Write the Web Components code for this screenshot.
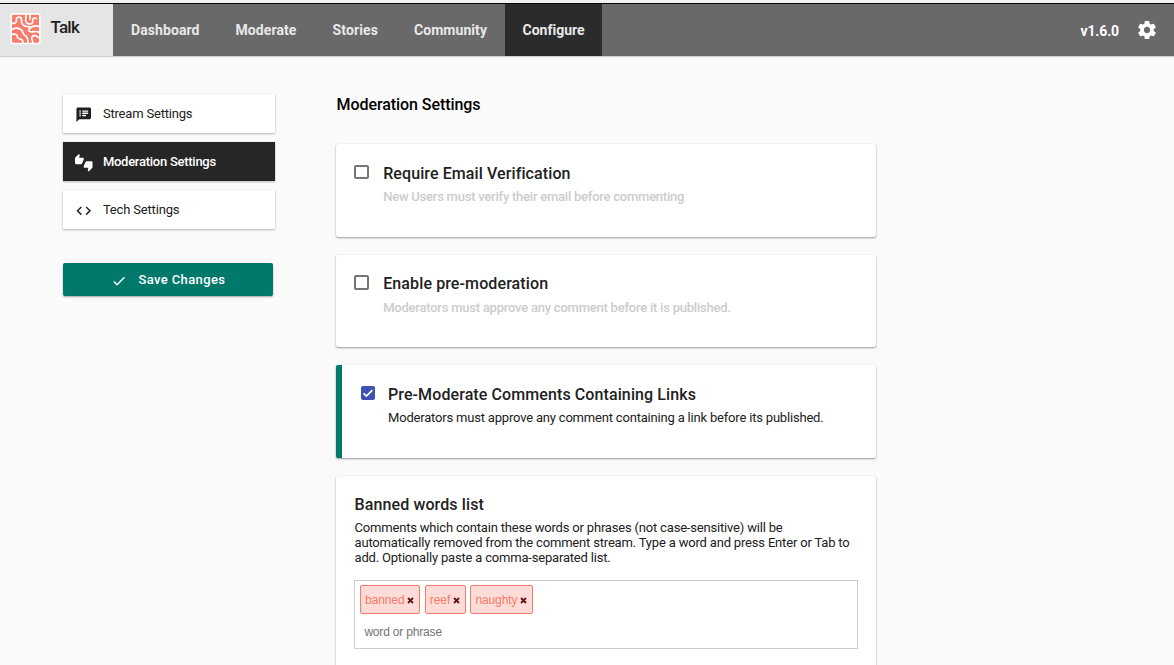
<!DOCTYPE html>
<html lang="en">
<head>
<meta charset="utf-8">
<title>Talk – Configure</title>
<style>
  html, body { margin: 0; height: 665px; overflow: hidden; background: #fafafa; }
  body { font-family: Roboto, "Liberation Sans", sans-serif; color: #212121; }
</style>
</head>
<body>
<talk-app></talk-app>

<script>
function component(name, html, setup) {
  const template = document.createElement('template');
  template.innerHTML = html;
  customElements.define(name, class extends HTMLElement {
    connectedCallback() {
      if (this.shadowRoot) return;
      this.attachShadow({ mode: 'open' }).append(template.content.cloneNode(true));
      if (setup) setup(this, this.shadowRoot);
    }
  });
}

component('talk-logo', `
  <style>
    :host { display: flex; box-sizing: border-box; width: 113px; height: 52px; padding: 8px 0 0 10px; background: #e5e5e5; color: #212121; }
    svg { display: block; width: 31px; height: 33px; flex: none; }
    .name { margin: 5px 0 0 9.5px; font-size: 17px; line-height: 20px; font-weight: 500; }
  </style>
  <svg viewBox="30 36 93 99">
    <rect x="31" y="39" width="91" height="94" rx="9" fill="#fff"/>
    <rect x="36" y="44" width="81" height="84" rx="4" fill="#f77c6b"/>
    <g fill="none" stroke="#fff" stroke-width="5" stroke-linecap="round" stroke-linejoin="round">
      <path d="M36 70C46 71 50 67 49 61C48 53 54 50 60 52C68 55 63 63 65 68C68 77 79 80 88 80"/>
      <path d="M77 44C80 52 74 58 78 66C83 75 99 74 98 64C97 54 102 51 109 56"/>
      <path d="M90 44V58"/>
      <path d="M36 88C47 83 58 84 64 90C71 96 68 104 76 107C84 111 84 119 84 128"/>
      <path d="M36 103C47 101 51 104 52 111C53 118 60 116 65 119C69 122 69 124 69 128"/>
      <path d="M116 79C105 76 94 79 88 86C82 95 94 97 101 95C107 94 112 95 116 97"/>
      <path d="M116 113C109 107 101 104 96 110C92 116 100 121 98 128"/>
    </g>
  </svg>
  <fit-text class="name" width="28.5">Talk</fit-text>
`);

component('nav-item', `
  <style>
    :host { display: flex; align-items: center; box-sizing: border-box; height: 52px; padding: 0 18px; color: #e8e8e8; font-size: 14px; line-height: 20px; font-weight: 700; }
    :host([active]) { background: #2b2b2b; padding: 0 17.5px; }
  </style>
  <slot></slot>
`);

component('talk-header', `
  <style>
    :host { display: flex; box-sizing: border-box; height: 56px; padding-top: 3px; background: #f1f1f2; }
    header { display: flex; flex: 1; height: 52px; border-top: 1px solid #000; background: #696969; box-shadow: 0 1px 0 #cfcfcf, 0 2px 1px #eee; position: relative; }
    nav { display: flex; }
    .tools { display: flex; align-items: center; margin-left: auto; padding-right: 17px; gap: 18px; color: #fff; font-size: 14px; font-weight: 700; }
    .tools fit-text { margin-top: 2px; }
    svg { width: 20px; height: 20px; }
  </style>
  <header>
    <talk-logo></talk-logo>
    <nav>
      <nav-item><fit-text width="68.5">Dashboard</fit-text></nav-item>
      <nav-item><fit-text width="61">Moderate</fit-text></nav-item>
      <nav-item><fit-text width="45.5">Stories</fit-text></nav-item>
      <nav-item><fit-text width="73">Community</fit-text></nav-item>
      <nav-item active><fit-text width="62">Configure</fit-text></nav-item>
    </nav>
    <div class="tools">
      <fit-text width="38.5">v1.6.0</fit-text>
      <svg viewBox="1 1 22 22" fill="#fff"><path d="M19.43 12.98c.04-.32.07-.64.07-.98s-.03-.66-.07-.98l2.11-1.65c.19-.15.24-.42.12-.64l-2-3.46c-.12-.22-.39-.3-.61-.22l-2.49 1c-.52-.4-1.08-.73-1.69-.98l-.38-2.65C14.46 2.18 14.25 2 14 2h-4c-.25 0-.46.18-.49.42l-.38 2.65c-.61.25-1.17.59-1.69.98l-2.49-1c-.23-.09-.49 0-.61.22l-2 3.46c-.13.22-.07.49.12.64l2.11 1.65c-.04.32-.07.65-.07.98s.03.66.07.98l-2.11 1.65c-.19.15-.24.42-.12.64l2 3.46c.12.22.39.3.61.22l2.49-1c.52.4 1.08.73 1.69.98l.38 2.65c.03.24.24.42.49.42h4c.25 0 .46-.18.49-.42l.38-2.65c.61-.25 1.17-.59 1.69-.98l2.49 1c.23.09.49 0 .61-.22l2-3.46c.12-.22.07-.49-.12-.64l-2.11-1.65zM12 15.5c-1.93 0-3.5-1.57-3.5-3.5s1.57-3.5 3.5-3.5 3.5 1.57 3.5 3.5-1.57 3.5-3.5 3.5z"/></svg>
    </div>
  </header>
`);

component('side-item', `
  <style>
    :host { display: flex; align-items: center; box-sizing: border-box; height: 39px; padding-left: 12px; gap: 10.4px; background: #fff; color: #212121; font-size: 13px; line-height: 20px; box-shadow: 0 1px 2px rgba(0,0,0,.26), 0 0 1px rgba(0,0,0,.12); }
    :host([active]) { background: #262626; color: #fff; font-weight: 500; }
    ::slotted(svg) { width: 17.5px; height: 17.5px; margin-top: 3px; fill: currentColor; flex: none; }
  </style>
  <slot></slot>
`);

component('save-button', `
  <style>
    :host { display: block; }
    button { display: flex; align-items: center; width: 210px; height: 33px; padding: 0 0 0 48px; gap: 11.4px; border: 0; border-radius: 2px; background: #00796b; color: #fff; font: 500 13px/20px Roboto, "Liberation Sans", sans-serif; box-shadow: 0 1px 2px rgba(0,0,0,.35); }
    svg { width: 16px; height: 16px; margin-top: 3px; fill: #fff; }
  </style>
  <button>
    <svg viewBox="0 0 24 24"><path d="M9 16.17L4.83 12l-1.42 1.41L9 19 21 7l-1.41-1.41z"/></svg>
    <slot></slot>
  </button>
`);

component('side-bar', `
  <style>
    :host { display: flex; flex-direction: column; width: 212px; gap: 9px; }
    save-button { margin-top: 25px; }
  </style>
  <side-item>
    <svg viewBox="0 0 24 24"><path d="M20 2H4c-1.1 0-1.99.9-1.99 2L2 22l4-4h14c1.1 0 2-.9 2-2V4c0-1.1-.9-2-2-2zM8 14H6v-2h2v2zm0-3H6V9h2v2zm0-3H6V6h2v2zm7 6h-5v-2h5v2zm3-3h-8V9h8v2zm0-3h-8V6h8v2z"/></svg>
    <fit-text width="89.5">Stream Settings</fit-text>
  </side-item>
  <side-item active>
    <svg viewBox="0 0 24 24"><path d="M12 6c0-.55-.45-1-1-1H5.82l.66-3.18.02-.23c0-.31-.13-.59-.33-.8L5.38 0 .44 4.94C.17 5.21 0 5.59 0 6v6.5c0 .83.67 1.5 1.5 1.5h6.75c.62 0 1.15-.38 1.38-.91l2.26-5.29c.07-.17.11-.36.11-.55V6zm10.5 4h-6.75c-.62 0-1.15.38-1.38.91l-2.26 5.29c-.07.17-.11.36-.11.55V18c0 .55.45 1 1 1h5.18l-.66 3.18-.02.24c0 .31.13.59.33.8l.79.78 4.94-4.94c.27-.27.44-.65.44-1.06v-6.5c0-.83-.67-1.5-1.5-1.5z"/></svg>
    <fit-text width="113">Moderation Settings</fit-text>
  </side-item>
  <side-item>
    <svg viewBox="0 0 24 24"><path d="M9.4 16.6L4.8 12l4.6-4.6L8 6l-6 6 6 6 1.4-1.4zm5.2 0l4.6-4.6-4.6-4.6L16 6l6 6-6 6-1.4-1.4z"/></svg>
    <fit-text width="76.5">Tech Settings</fit-text>
  </side-item>
  <save-button><fit-text width="87">Save Changes</fit-text></save-button>
`);

component('check-box', `
  <style>
    :host { display: block; box-sizing: border-box; width: 15px; height: 14.5px; border: 2px solid #757575; border-radius: 2px; flex: none; }
    svg { display: none; }
    :host([checked]) { border: 0; width: 14px; height: 14px; background: #3f51b5; }
    :host([checked]) svg { display: block; }
  </style>
  <svg viewBox="0 0 14 14" width="14" height="14"><path d="M2.6 7.4L5.4 10.1L11.4 4.2" fill="none" stroke="#fff" stroke-width="1.8"/></svg>
`);

component('settings-card', `
  <style>
    :host { display: flex; box-sizing: border-box; height: 92.5px; padding: 18.5px 18px 0; gap: 14.2px; background: #fff; border-radius: 2px; box-shadow: 0 1px 2px rgba(0,0,0,.38), 0 0 1px rgba(0,0,0,.12); color: #212121; }
    :host([off]) .body { color: #ccc; font-weight: 500; }
    :host([on]) { border-left: 6px solid #00796b; padding-left: 19px; gap: 13px; }
    :host([tall]) { height: 210px; padding-left: 18.5px; }
    .col { flex: 1; }
    .title { font-size: 16px; line-height: 21px; font-weight: 500; color: #212121; }
    .body { font-size: 13px; line-height: 15px; margin-top: 5.5px; }
    :host([tall]) .body { margin-top: 5px; }
    ::slotted(check-box) { margin-top: 2px; }
  </style>
  <slot name="control"></slot>
  <div class="col">
    <div class="title"><slot name="title"></slot></div>
    <div class="body"><slot></slot></div>
  </div>
`);

component('word-tag', `
  <style>
    :host { display: flex; align-items: center; box-sizing: border-box; height: 29px; padding: 1px 5px 0 4px; gap: 2.5px; border: 1px solid #f77c6b; border-radius: 2px; background: #ffdcd7; color: #f77c6b; font: 12px/16px "Liberation Sans", Arial, sans-serif; }
    svg { width: 7px; height: 7px; margin-top: 1px; }
  </style>
  <slot></slot>
  <svg viewBox="0 0 7 7"><path d="M1 1L6 6M6 1L1 6" stroke="#63171b" stroke-width="1.9"/></svg>
`);

component('tag-input', `
  <style>
    :host { display: block; box-sizing: border-box; width: 504px; height: 69px; margin: 15px 0 0 -.5px; padding: 4px 5px; border: 1px solid #ccc; background: #fff; }
    .tags { display: flex; gap: 4.7px; }
    .hint { margin: 10px 0 0 4.4px; font: 12px/16px "Liberation Sans", Arial, sans-serif; color: #757575; }
  </style>
  <div class="tags"><slot></slot></div>
  <div class="hint"><fit-text width="77.5">word or phrase</fit-text></div>
`);

component('talk-app', `
  <style>
    :host { display: block; }
    .page { display: flex; padding: 38px 0 0 63px; gap: 61px; }
    main { display: flex; flex-direction: column; width: 540px; gap: 18px; }
    h3 { margin: 0 0 11px .5px; font-size: 16px; line-height: 21px; font-weight: 500; color: #000; }
  </style>
  <talk-header></talk-header>
  <div class="page">
    <side-bar></side-bar>
    <main>
      <h3><fit-text width="144">Moderation Settings</fit-text></h3>
      <settings-card off>
        <check-box slot="control"></check-box>
        <fit-text slot="title" width="187">Require Email Verification</fit-text>
        <fit-text width="301">New Users must verify their email before commenting</fit-text>
      </settings-card>
      <settings-card off>
        <check-box slot="control"></check-box>
        <fit-text slot="title" width="165">Enable pre-moderation</fit-text>
        <fit-text width="347.5">Moderators must approve any comment before it is published.</fit-text>
      </settings-card>
      <settings-card on>
        <check-box slot="control" checked></check-box>
        <fit-text slot="title" width="308">Pre-Moderate Comments Containing Links</fit-text>
        <fit-text width="435.5">Moderators must approve any comment containing a link before its published.</fit-text>
      </settings-card>
      <settings-card tall>
        <fit-text slot="title" width="129.5">Banned words list</fit-text>
        <fit-text width="428">Comments which contain these words or phrases (not case-sensitive) will be</fit-text>
        <fit-text width="495">automatically removed from the comment stream. Type a word and press Enter or Tab to</fit-text>
        <fit-text width="256">add. Optionally paste a comma-separated list.</fit-text>
        <tag-input>
          <word-tag><fit-text width="39.5">banned</fit-text></word-tag>
          <word-tag><fit-text width="20.5">reef</fit-text></word-tag>
          <word-tag><fit-text width="42">naughty</fit-text></word-tag>
        </tag-input>
      </settings-card>
    </main>
  </div>
`);

/* Spreads a single line of text over a fixed width by adjusting its tracking. */
component('fit-text', `
  <style>
    :host { display: block; white-space: nowrap; }
    span { display: inline-block; vertical-align: top; }
  </style>
  <span><slot></slot></span>
`, (host, root) => {
  const span = root.querySelector('span');
  const width = parseFloat(host.getAttribute('width'));
  const natural = span.getBoundingClientRect().width;
  const tracking = (width - natural) / host.textContent.length;
  span.style.letterSpacing = tracking.toFixed(4) + 'px';
  host.style.width = width + 'px';
});
</script>
</body>
</html>
